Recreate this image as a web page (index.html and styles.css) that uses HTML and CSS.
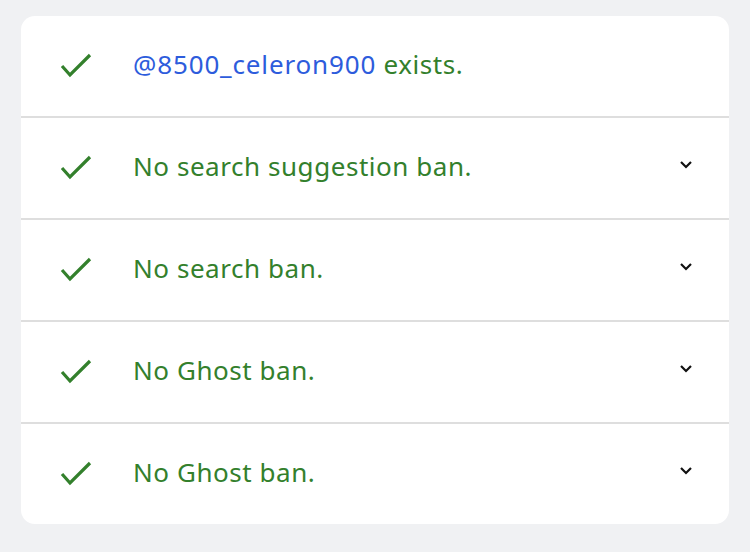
FILE: index.html
```html
<!DOCTYPE html>
<html>
<head>
<meta charset="utf-8">
<link rel="stylesheet" href="styles.css">
</head>
<body>
<div class="card">
  <div class="row">
    <svg class="check" viewBox="0 0 36 28" width="36" height="28"><polyline points="3,14 11,23 31,3" fill="none" stroke="#33802c" stroke-width="3.2"/></svg>
    <div class="label"><span class="user">@8500_celeron900</span> exists.</div>
  </div>
  <div class="row">
    <svg class="check" viewBox="0 0 36 28" width="36" height="28"><polyline points="3,14 11,23 31,3" fill="none" stroke="#33802c" stroke-width="3.2"/></svg>
    <div class="label">No search suggestion ban.</div>
    <svg class="chev" viewBox="0 0 14 9" width="14" height="9"><polyline points="2,2 7,7 12,2" fill="none" stroke="#111" stroke-width="2.2"/></svg>
  </div>
  <div class="row">
    <svg class="check" viewBox="0 0 36 28" width="36" height="28"><polyline points="3,14 11,23 31,3" fill="none" stroke="#33802c" stroke-width="3.2"/></svg>
    <div class="label">No search ban.</div>
    <svg class="chev" viewBox="0 0 14 9" width="14" height="9"><polyline points="2,2 7,7 12,2" fill="none" stroke="#111" stroke-width="2.2"/></svg>
  </div>
  <div class="row">
    <svg class="check" viewBox="0 0 36 28" width="36" height="28"><polyline points="3,14 11,23 31,3" fill="none" stroke="#33802c" stroke-width="3.2"/></svg>
    <div class="label">No Ghost ban.</div>
    <svg class="chev" viewBox="0 0 14 9" width="14" height="9"><polyline points="2,2 7,7 12,2" fill="none" stroke="#111" stroke-width="2.2"/></svg>
  </div>
  <div class="row">
    <svg class="check" viewBox="0 0 36 28" width="36" height="28"><polyline points="3,14 11,23 31,3" fill="none" stroke="#33802c" stroke-width="3.2"/></svg>
    <div class="label">No Ghost ban.</div>
    <svg class="chev" viewBox="0 0 14 9" width="14" height="9"><polyline points="2,2 7,7 12,2" fill="none" stroke="#111" stroke-width="2.2"/></svg>
  </div>
</div>
</body>
</html>
```
FILE: styles.css
```css
html, body {
  margin: 0;
  padding: 0;
  background: #f0f1f3;
}
body {
  padding: 16px 21px 0 21px;
  font-family: "Noto Sans", "Open Sans", sans-serif;
}
.card {
  background: #ffffff;
  border-radius: 14px;
  overflow: hidden;
}
.row {
  height: 100px;
  display: flex;
  align-items: center;
  padding: 0 36px 0 38px;
  border-top: 2px solid #dedede;
}
.row:first-child {
  border-top: none;
}
.check {
  flex: none;
  margin-right: 38px;
}
.label {
  flex: 1;
  font-size: 26px;
  line-height: 30px;
  color: #33802c;
  letter-spacing: 0.55px;
  margin-bottom: 4px;
}
.user {
  color: #2d5cdc;
  letter-spacing: 0.85px;
}
.chev {
  flex: none;
  margin-bottom: 8px;
}
```
